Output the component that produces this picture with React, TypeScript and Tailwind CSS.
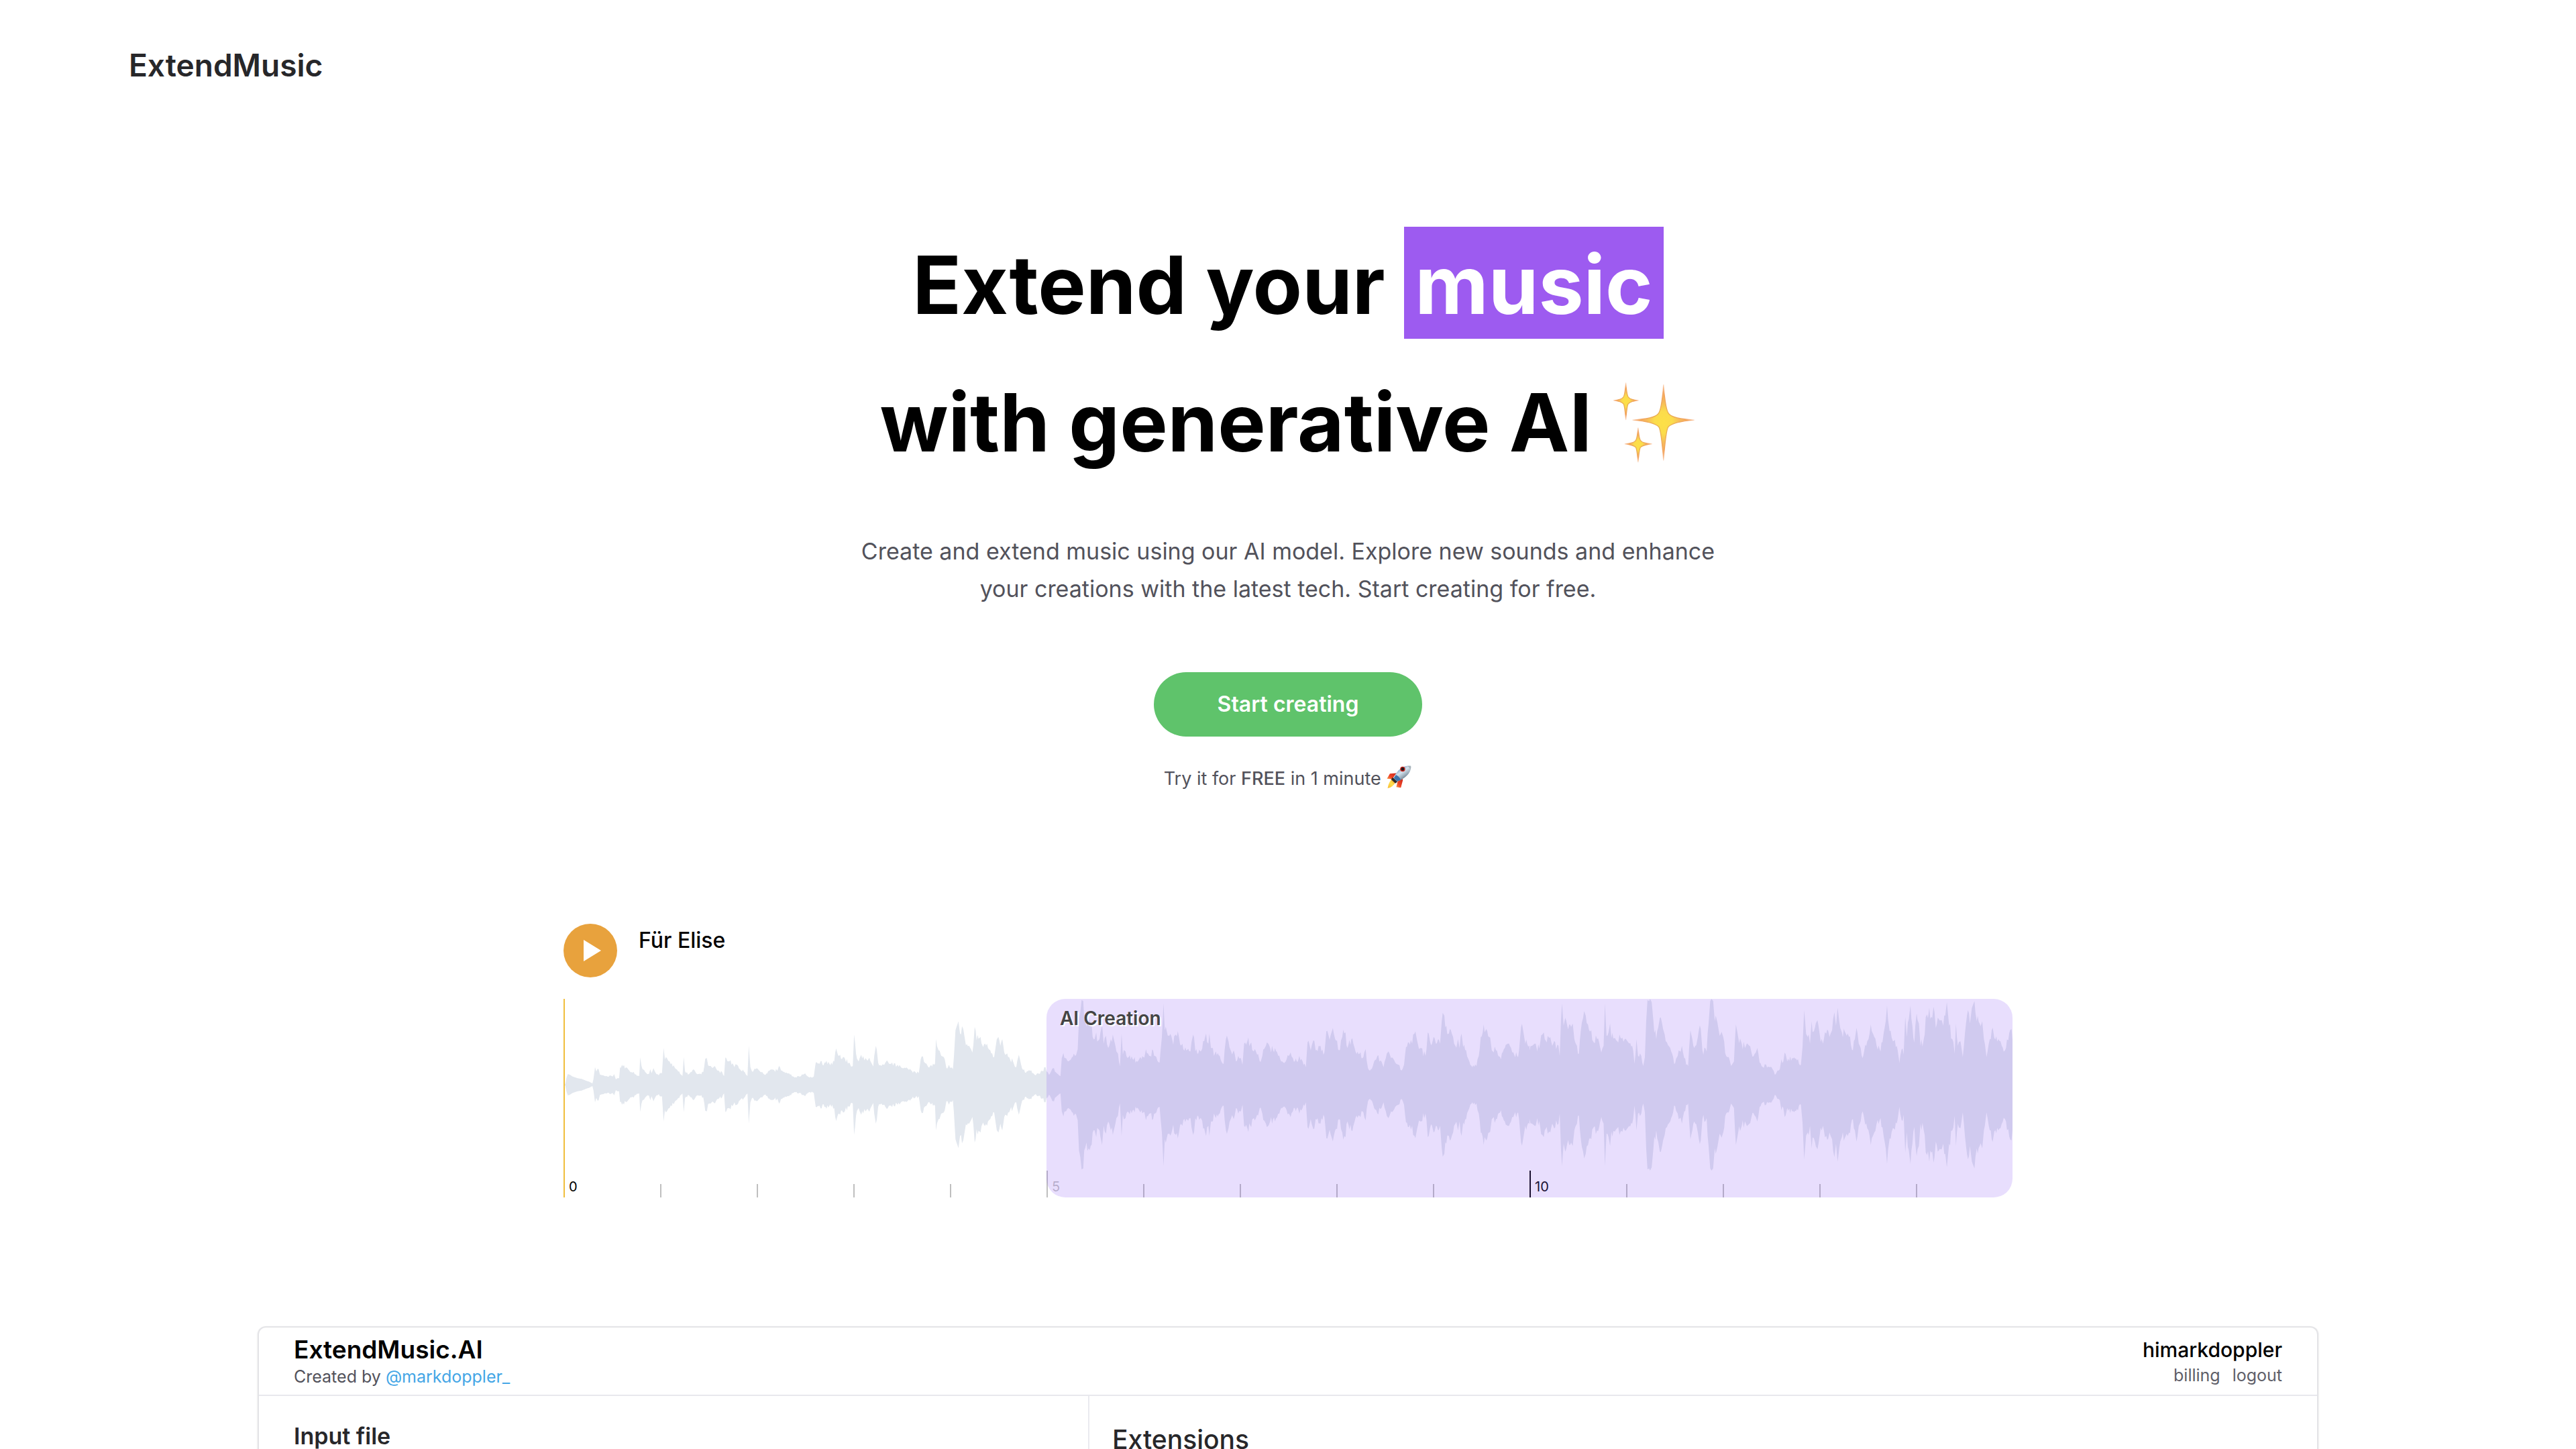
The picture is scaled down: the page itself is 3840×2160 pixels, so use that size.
import React from "react";

type Peak = [number, number];

const UNIT = 1486;
const MID = 384;

const first: Peak[] = [[3,0],[6,6],[9,29],[13,47],[18,46],[28,37],[43,29],[56,26],[68,19],[78,14],[89,6],[92,24],[97,79],[101,59],[105,71],[108,70],[112,46],[123,42],[133,39],[148,39],[156,47],[161,24],[166,29],[171,29],[174,77],[183,82],[196,75],[203,62],[213,54],[223,46],[233,39],[236,122],[240,84],[248,66],[255,52],[263,49],[267,69],[271,52],[277,74],[284,52],[293,42],[303,52],[308,164],[312,114],[323,106],[330,92],[343,74],[353,59],[366,39],[370,124],[374,59],[383,46],[391,56],[400,69],[408,52],[418,49],[430,56],[436,116],[441,119],[445,86],[453,84],[463,81],[473,64],[488,56],[494,39],[498,122],[508,104],[520,96],[526,79],[534,89],[543,69],[555,59],[566,39],[570,174],[575,79],[580,59],[588,72],[603,62],[618,46],[633,62],[648,66],[658,62],[663,84],[673,62],[688,52],[708,36],[728,36],[741,49],[758,32],[770,36],[776,99],[788,94],[803,99],[818,94],[833,104],[839,162],[848,129],[863,124],[878,99],[890,84],[894,224],[900,139],[908,104],[916,134],[926,109],[938,114],[953,82],[961,174],[968,99],[978,84],[995,109],[1008,94],[1028,89],[1043,74],[1063,66],[1083,56],[1093,52],[1099,114],[1106,126],[1113,96],[1128,84],[1143,94],[1146,204],[1154,154],[1162,129],[1170,124],[1178,74],[1186,89],[1198,69],[1206,244],[1212,270],[1220,229],[1230,249],[1235,204],[1248,174],[1258,144],[1265,259],[1271,199],[1283,214],[1291,169],[1303,184],[1313,154],[1325,124],[1330,174],[1338,214],[1344,174],[1350,204],[1356,144],[1368,124],[1383,104],[1393,79],[1401,134],[1408,89],[1420,54],[1436,62],[1450,44],[1463,49],[1473,62],[1483,79],[1486,59]];

const second: Peak[] = [[0,59],[8,44],[15,62],[23,74],[30,54],[43,39],[47,119],[52,142],[58,119],[68,104],[78,122],[88,129],[96,159],[100,294],[104,324],[108,379],[113,374],[116,294],[123,259],[130,284],[136,274],[142,214],[148,204],[153,234],[160,199],[166,234],[171,269],[176,184],[183,219],[190,164],[198,204],[204,224],[212,174],[220,139],[226,84],[231,229],[235,134],[243,149],[253,124],[268,112],[283,109],[298,124],[306,159],[316,129],[328,154],[338,124],[348,99],[355,214],[360,364],[364,244],[370,239],[378,219],[390,179],[398,224],[408,209],[418,184],[430,154],[443,149],[451,224],[458,149],[473,149],[491,229],[498,184],[501,229],[506,164],[518,139],[533,129],[545,94],[552,204],[560,194],[568,149],[576,154],[583,104],[590,129],[598,119],[603,89],[608,184],[618,194],[630,189],[638,149],[648,134],[656,104],[664,129],[675,174],[688,164],[703,164],[713,129],[725,104],[736,104],[748,134],[758,119],[770,104],[778,129],[788,104],[798,79],[803,189],[813,154],[821,199],[828,154],[843,174],[855,144],[861,239],[868,219],[878,239],[888,204],[900,154],[910,214],[920,234],[926,164],[938,204],[948,164],[963,139],[975,124],[982,159],[989,74],[998,69],[1008,104],[1018,129],[1028,109],[1037,79],[1044,119],[1052,149],[1060,119],[1070,109],[1083,89],[1093,64],[1100,89],[1106,169],[1115,189],[1125,184],[1132,229],[1140,199],[1150,164],[1166,129],[1173,234],[1180,194],[1191,214],[1198,184],[1211,184],[1216,284],[1224,309],[1230,264],[1238,229],[1251,214],[1258,174],[1266,204],[1271,164],[1277,229],[1282,169],[1291,154],[1301,104],[1310,79],[1323,84],[1330,129],[1336,214],[1345,269],[1353,249],[1362,214],[1370,154],[1383,154],[1398,114],[1410,164],[1423,184],[1433,144],[1451,124],[1460,259],[1468,229],[1473,184],[1486,174]];

const third: Peak[] = [[0,154],[8,174],[16,184],[24,149],[33,189],[44,234],[53,189],[61,209],[73,184],[86,179],[93,129],[97,294],[100,364],[105,264],[110,299],[116,264],[128,259],[133,274],[138,204],[146,174],[152,139],[158,244],[165,299],[173,309],[180,269],[190,244],[198,189],[208,204],[221,144],[228,174],[232,364],[237,219],[248,274],[252,209],[263,209],[270,194],[277,224],[293,204],[304,189],[316,174],[323,94],[329,204],[334,129],[344,129],[350,84],[355,124],[359,284],[363,379],[368,374],[376,369],[381,289],[390,204],[401,299],[408,274],[416,224],[423,189],[433,164],[445,94],[456,129],[469,174],[476,119],[488,84],[495,244],[501,204],[510,174],[518,214],[527,249],[532,154],[545,149],[551,274],[556,374],[560,384],[565,374],[570,284],[578,279],[585,219],[596,214],[605,129],[613,124],[620,84],[629,104],[635,269],[642,214],[653,184],[663,164],[673,179],[683,144],[693,139],[701,164],[708,99],[718,79],[728,89],[738,79],[748,69],[755,44],[763,64],[770,69],[775,114],[781,104],[785,144],[793,104],[808,119],[823,109],[835,89],[840,169],[845,334],[848,284],[856,214],[863,184],[868,284],[875,239],[886,289],[893,224],[903,184],[913,229],[923,214],[931,244],[938,324],[943,264],[948,344],[953,284],[961,234],[973,229],[983,214],[995,154],[1006,254],[1013,184],[1025,119],[1033,179],[1043,204],[1050,269],[1058,224],[1068,174],[1080,149],[1090,234],[1100,354],[1108,239],[1118,194],[1130,174],[1138,99],[1145,159],[1151,134],[1156,304],[1161,214],[1167,294],[1172,354],[1178,264],[1184,189],[1191,319],[1198,274],[1203,174],[1213,204],[1223,314],[1230,344],[1236,304],[1243,349],[1250,254],[1265,289],[1273,264],[1284,369],[1291,264],[1301,204],[1308,139],[1312,274],[1318,174],[1326,194],[1333,124],[1340,234],[1349,334],[1355,274],[1369,374],[1376,284],[1385,274],[1393,284],[1398,204],[1406,124],[1413,184],[1422,244],[1430,209],[1443,204],[1453,174],[1463,154],[1473,199],[1483,249],[1486,204]];

/* Adds fine alternating ripple to an amplitude outline and mirrors it around the middle. */
function outline(peaks: Peak[], offset: number): string {
  const pts: Peak[] = [];
  for (let i = 0; i < peaks.length - 1; i++) {
    const [x0, a0] = peaks[i];
    const [x1, a1] = peaks[i + 1];
    pts.push([x0, a0]);
    for (let x = x0 + 3; x < x1 - 2; x += 3) {
      const base = a0 + ((a1 - a0) * (x - x0)) / (x1 - x0);
      const noise = Math.sin(x * 12.9898 + offset) * 43758.5453;
      const r = noise - Math.floor(noise);
      const swing = x + offset < 90 ? 0 : 0.24;
      pts.push([x, Math.min(MID, base * (1 - swing / 2 + swing * r))]);
    }
  }
  pts.push(peaks[peaks.length - 1]);
  const top = pts.map(([x, a]) => `${x + offset} ${(MID - a).toFixed(1)}`);
  const bottom = pts.map(([x, a]) => `${x + offset} ${(MID + a).toFixed(1)}`).reverse();
  return `M${top.join("L")}L${bottom.join("L")}Z`;
}

function Waveform() {
  return (
    <svg
      className="block h-[256px] w-full"
      viewBox={`0 0 ${UNIT * 3} ${MID * 2}`}
      preserveAspectRatio="none"
      fill="#e2e7ee"
      aria-hidden="true"
    >
      <path d={outline(first, 0)} />
      <path d={outline(second, UNIT)} />
      <path d={outline(third, UNIT * 2)} />
    </svg>
  );
}

function Star({ cx, cy, l, r, t, b, k }: { cx: number; cy: number; l: number; r: number; t: number; b: number; k: number }) {
  const d = `M${cx} ${t}Q${cx + k * 0.35} ${cy - k * 1.4} ${cx + k} ${cy - k}Q${cx + k * 1.6} ${cy - k * 0.25} ${r} ${cy}Q${cx + k * 1.6} ${cy + k * 0.3} ${cx + k * 0.8} ${cy + k * 1.2}Q${cx + k * 0.4} ${cy + k * 1.8} ${cx} ${b}Q${cx - k * 0.4} ${cy + k * 1.8} ${cx - k * 0.8} ${cy + k * 1.2}Q${cx - k * 1.6} ${cy + k * 0.3} ${l} ${cy}Q${cx - k * 1.6} ${cy - k * 0.25} ${cx - k} ${cy - k}Q${cx - k * 0.35} ${cy - k * 1.4} ${cx} ${t}Z`;
  return <path d={d} fill="url(#spark)" stroke="url(#sparkEdge)" strokeWidth="4" strokeLinejoin="round" />;
}

function Sparkles() {
  return (
    <svg className="inline-block h-[123px] w-[127px] align-[-18px]" viewBox="170 80 380 370" role="img" aria-label="sparkles">
      <defs>
        <radialGradient id="spark">
          <stop offset="0" stopColor="#fde047" />
          <stop offset="0.3" stopColor="#fbdc4c" />
          <stop offset="0.55" stopColor="#f6b95c" />
          <stop offset="1" stopColor="#f39a5a" />
        </radialGradient>
        <radialGradient id="sparkEdge">
          <stop offset="0.2" stopColor="#e8b050" />
          <stop offset="0.7" stopColor="#f2a25e" />
          <stop offset="1" stopColor="#f7b98e" stopOpacity="0.5" />
        </radialGradient>
      </defs>
      <Star cx={403} cy={255} l={265} r={540} t={97} b={435} k={26} />
      <Star cx={234} cy={167} l={179} r={290} t={89} b={253} k={13} />
      <Star cx={289} cy={362} l={230} r={350} t={290} b={443} k={13} />
    </svg>
  );
}

function Rocket() {
  return (
    <svg className="inline-block h-9 w-[39px] align-[-6px]" viewBox="92 60 112 106" role="img" aria-label="rocket">
      <defs>
        <linearGradient id="hull" x1="0.2" y1="0.1" x2="0.8" y2="0.9">
          <stop offset="0" stopColor="#4d7fb3" />
          <stop offset="0.4" stopColor="#d5e3ee" />
          <stop offset="0.65" stopColor="#9fb0bd" />
          <stop offset="1" stopColor="#3f5263" />
        </linearGradient>
        <linearGradient id="flame" x1="1" y1="0" x2="0" y2="1">
          <stop offset="0" stopColor="#f08a24" />
          <stop offset="0.5" stopColor="#ffe14d" />
          <stop offset="1" stopColor="#f7b733" />
        </linearGradient>
        <linearGradient id="fin" x1="1" y1="0" x2="0" y2="1">
          <stop offset="0" stopColor="#c9261a" />
          <stop offset="0.6" stopColor="#ee4427" />
          <stop offset="1" stopColor="#f7a04a" />
        </linearGradient>
      </defs>
      <path d="M137 97L108 99Q103 108 95 121L118 123Z" fill="url(#fin)" />
      <path d="M162 120L165 127L156 161L136 158L142 133Z" fill="url(#fin)" />
      <path d="M120 122Q104 131 98 163Q122 158 132 137Z" fill="url(#flame)" />
      <path d="M121 115L141 135L132 142L113 124Z" fill="#2f2a2a" />
      <path d="M200 65C180 62 156 70 140 92Q127 108 125 118L139 133Q156 130 172 117C192 101 202 84 200 65Z" fill="url(#hull)" />
      <path d="M134 105Q146 108 156 126L139 133L125 118Z" fill="#3d74ac" />
      <path d="M184 65Q195 71 197 82Q202 73 200 65Z" fill="#a9b4bb" />
      <circle cx="164" cy="79" r="11" fill="#c9281e" />
      <circle cx="164" cy="79" r="7" fill="#1c1a20" />
    </svg>
  );
}

const seconds = Array.from({ length: 15 }, (_, i) => i);

function Timeline() {
  return (
    <div className="grid h-10 grid-cols-[repeat(15,minmax(0,1fr))] items-end text-xl leading-6">
      {seconds.map((s) =>
        s % 10 === 0 ? (
          <div key={s} className="h-10 border-l-2 border-black pt-3 pl-1.5 text-black">{s}</div>
        ) : s % 5 === 0 ? (
          <div key={s} className="h-10 border-l-2 border-black/25 pt-3 pl-1.5 text-black/25">{s}</div>
        ) : (
          <div key={s} className="h-5 border-l-2 border-black/25" />
        ),
      )}
    </div>
  );
}

export default function App() {
  return (
    <div className="min-h-screen bg-white font-[Inter,'Liberation_Sans',sans-serif] text-black">
      <header className="px-48 py-16">
        <a href="#" className="block text-[46px] leading-[66px] font-semibold text-[#27272a]">ExtendMusic</a>
      </header>

      <main>
        <section className="flex flex-col items-center pt-32 text-center">
          <h1 className="text-[120px] leading-[205px] font-bold">
            Extend your <span className="bg-[#9d5bf0] px-4 pt-3.5 pb-2 text-white">music</span>
            <br />
            with generative AI <Sparkles />
          </h1>
          <p className="mt-[62px] text-[34px] leading-[56px] text-[#52525b]">
            Create and extend music using our AI model. Explore new sounds and enhance
            <br />
            your creations with the latest tech. Start creating for free.
          </p>
          <button type="button" className="mt-24 h-24 w-[400px] rounded-full bg-[#5fc36b] text-[32px] font-semibold text-white">
            Start creating
          </button>
          <p className="mt-[42px] text-[27px] leading-10 text-[#52525b]">
            Try it for <span className="font-medium">FREE</span> in 1 minute <Rocket />
          </p>
        </section>

        <section className="mx-auto mt-[196px] w-full max-w-[2160px]">
          <div className="flex items-start gap-8">
            <button type="button" aria-label="Play" className="flex size-20 items-center justify-center rounded-full bg-[#e8a23d]">
              <svg className="ml-1.5 h-8 w-[26px]" viewBox="0 0 26 32" fill="#fff" aria-hidden="true">
                <path d="M0 0L26 16L0 32Z" />
              </svg>
            </button>
            <h2 className="text-[32px] leading-[50px] font-medium">Für Elise</h2>
          </div>
          <div className="relative mt-8">
            <Waveform />
            <Timeline />
            <div className="absolute inset-y-0 right-0 left-1/3 rounded-[28px] bg-[#8b5cf6]/20" />
            <div className="absolute top-2 left-1/3 pl-5 text-[28px] leading-[42px] font-semibold text-[#444] [text-shadow:2px_2px_0_#fff]">
              AI Creation
            </div>
            <div className="absolute inset-y-0 left-0 w-0.5 bg-[#f0be3c]" />
          </div>
        </section>

        <section className="mx-auto mt-48 w-4/5 rounded-t-xl border-2 border-b-0 border-[#e4e4e7] shadow-sm">
          <div className="flex h-[102px] items-start justify-between border-b-2 border-[#e8e8ed] px-[52px] pt-3">
            <div>
              <p className="text-[37px] leading-[42px] font-semibold">ExtendMusic.AI</p>
              <p className="text-[25px] leading-[38px] text-[#52525b]">
                Created by <a href="#" className="text-[#44a6e6]">@markdoppler_</a>
              </p>
            </div>
            <div className="text-right">
              <p className="text-[30px] leading-[42px] font-medium">himarkdoppler</p>
              <p className="flex justify-end gap-[18px] text-[25px] leading-[34px] text-[#5f5f69]">
                <a href="#">billing</a>
                <a href="#">logout</a>
              </p>
            </div>
          </div>
          <div className="grid grid-cols-[1238fr_1830fr] text-[#27272a]">
            <h3 className="border-r-2 border-[#eaeaef] pt-9 pb-6 pl-[52px] text-[34px] leading-[48px] font-semibold">Input file</h3>
            <h3 className="pt-10 pb-6 pl-[34px] text-[39px] leading-[50px] font-medium">Extensions</h3>
          </div>
        </section>
      </main>
    </div>
  );
}
